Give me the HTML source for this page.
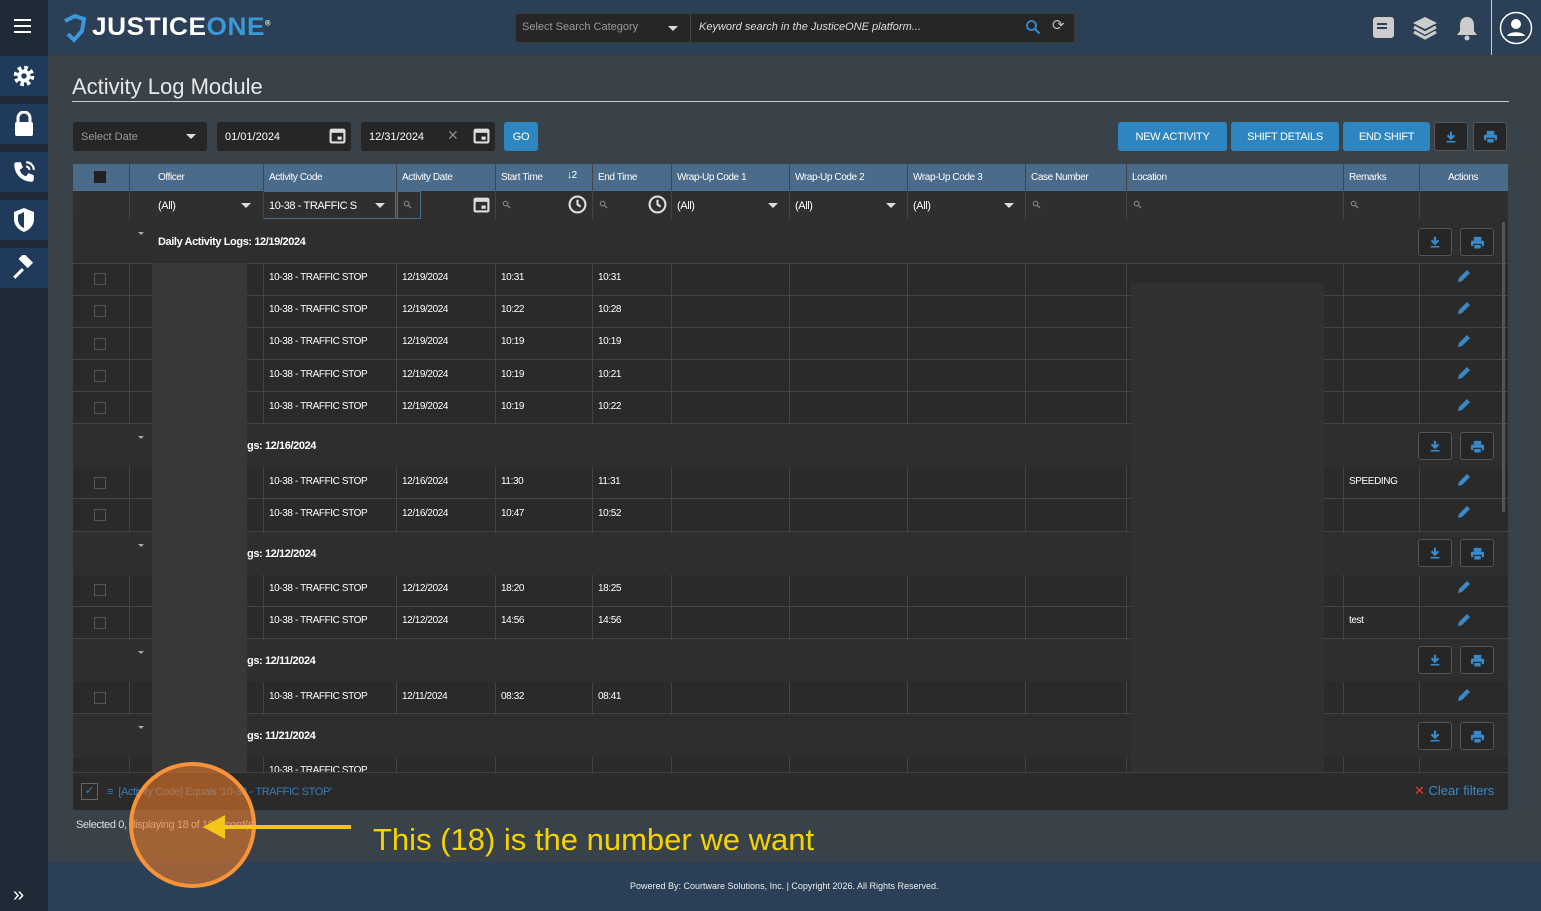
<!DOCTYPE html>
<html><head><meta charset="utf-8"><style>
*{box-sizing:border-box;margin:0;padding:0}
body{width:1541px;height:911px;overflow:hidden;background:#3a4249;font-family:"Liberation Sans",sans-serif;color:#fff;position:relative}
.a{position:absolute}
.top{left:0;top:0;width:1541px;height:55px;background:#2b4056}
.side{left:0;top:0;width:48px;height:911px;background:#1e2b37}
.sbtn{left:0;width:48px;height:40px;background:#1f3a5a;display:flex;align-items:center;justify-content:center}
.t{font-size:10px;letter-spacing:-0.4px;color:#fff;white-space:nowrap}
.hdr{top:164px;height:27px;background:#4a6b8a}
.flt{top:191px;height:29px;background:#2f2f2f}
.vl{width:1px;background:#444}
.row{left:73px;width:1435px;background:#2a2a2a;border-bottom:1px solid #444}
.grp{left:73px;width:1435px;background:#2e2e2e;border-bottom:1px solid #444}
.cb{width:12px;height:12px;border:1px solid #555}
.ib{width:34px;height:28px;border:1px solid #555;border-radius:3px;background:#262626;display:flex;align-items:center;justify-content:center}
.btn{top:122px;height:29px;background:#2e86c1;border-radius:3px;font-size:11px;display:flex;align-items:center;justify-content:center;letter-spacing:-0.3px}
.inp{top:122px;height:29px;background:#262626;border-radius:3px;font-size:11px;display:flex;align-items:center;padding-left:8px}
.pen{position:absolute;left:1456px;width:16px;height:16px}
</style></head><body>
<svg width="0" height="0" style="position:absolute"><defs>
<symbol id="dl" viewBox="0 0 16 16"><path d="M8 2v8M4 6l4 4 4-4" fill="none" stroke="#3a8ac9" stroke-width="2.5"/><rect x="3" y="12.5" width="10" height="1.8" fill="#3a8ac9"/></symbol>
<symbol id="pr" viewBox="0 0 16 16"><rect x="4" y="2" width="8" height="4" fill="#3a8ac9"/><rect x="1" y="6" width="14" height="6" rx="1.5" fill="#3a8ac9"/><rect x="4" y="10" width="8" height="5" fill="#3a8ac9" stroke="#262626" stroke-width="1.2"/></symbol>
<symbol id="pn" viewBox="0 0 16 16"><path d="M2 14l1-4 8-8 3 3-8 8z" fill="#3a8ac9"/></symbol>
<symbol id="cal" viewBox="0 0 16 16"><rect x="1.5" y="2.5" width="13" height="12" rx="1" fill="none" stroke="#ddd" stroke-width="2"/><rect x="1.5" y="2.5" width="13" height="3" fill="#ddd"/><rect x="8" y="9" width="4" height="3" fill="#ddd"/></symbol>
<symbol id="clk" viewBox="0 0 18 18"><circle cx="9" cy="9" r="7.5" fill="none" stroke="#ddd" stroke-width="2"/><path d="M9 4.5V9l3 2" fill="none" stroke="#ddd" stroke-width="2"/></symbol>
<symbol id="mg" viewBox="0 0 10 10"><circle cx="4" cy="4" r="2.6" fill="none" stroke="#888" stroke-width="1.2"/><path d="M6 6l3 3" stroke="#888" stroke-width="1.3"/></symbol>
</defs></svg>
<div class="a top"></div>
<div class="a side"></div>
<div class="a" style="left:0;top:0;width:48px;height:55px;background:#1e2b37"></div>
<div class="a" style="left:14px;top:19px;width:17px;height:2px;background:#fff;box-shadow:0 6px 0 #fff,0 12px 0 #fff"></div>
<!-- logo -->
<svg class="a" style="left:60px;top:12px" width="30" height="32" viewBox="0 0 30 32"><path d="M5 9 L15 4 L24 7 L22 19 L14 28 L8 22" fill="none" stroke="#3a9ad9" stroke-width="4"/></svg>
<div class="a" style="left:92px;top:13px;font-size:25px;font-weight:bold;letter-spacing:0.5px;transform:scaleX(1.05);transform-origin:left">JUSTICE<span style="color:#3a9ad9">ONE</span><sup style="font-size:7px">®</sup></div>
<!-- sidebar buttons -->
<div class="a sbtn" style="top:56px"><svg width="26" height="26" viewBox="0 0 24 24"><circle cx="12" cy="12" r="7" fill="none" stroke="#fff" stroke-width="5" stroke-dasharray="3 2.5"/><circle cx="12" cy="12" r="6" fill="#fff"/><circle cx="12" cy="12" r="2.5" fill="#1f3a5a"/></svg></div>
<div class="a sbtn" style="top:104px"><svg width="24" height="26" viewBox="0 0 24 26"><path d="M6 11V7a6 6 0 0112 0v4" fill="none" stroke="#fff" stroke-width="3"/><rect x="3" y="11" width="18" height="14" rx="2" fill="#fff"/></svg></div>
<div class="a sbtn" style="top:152px"><svg width="26" height="26" viewBox="0 0 24 24"><path d="M5 3l4 0 2 5-3 2c1 3 3 5 6 6l2-3 5 2v4c0 1-1 2-2 2C10 21 3 14 3 5c0-1 1-2 2-2z" fill="#fff"/><path d="M14 3a7 7 0 017 7M14 7a3 3 0 013 3" fill="none" stroke="#fff" stroke-width="2"/></svg></div>
<div class="a sbtn" style="top:200px"><svg width="24" height="26" viewBox="0 0 24 26"><path d="M12 1L22 5v7c0 7-5 11-10 13C7 23 2 19 2 12V5z" fill="#fff"/><path d="M12 5v16c-3-1-6-4-6-9V8z" fill="#1f3a5a"/></svg></div>
<div class="a sbtn" style="top:248px"><svg width="26" height="26" viewBox="0 0 24 24"><rect x="8" y="2" width="12" height="7" transform="rotate(45 14 5)" fill="#fff"/><path d="M10 12L2 20l2 2 8-8" fill="#fff"/></svg></div>
<div class="a" style="left:13px;top:884px;font-size:20px;color:#fff">»</div>
<!-- search -->
<div class="a" style="left:515px;top:13px;width:560px;height:30px;background:#262626;border:1px solid #3c3c3c;border-radius:2px"></div>
<div class="a" style="left:690px;top:13px;width:1px;height:30px;background:#444"></div>
<div class="a" style="left:522px;top:21px;font-size:11px;color:#999">Select Search Category</div>
<div class="a" style="left:668px;top:26px;border:5px solid transparent;border-top-color:#ddd"></div>
<div class="a" style="left:699px;top:21px;font-size:11px;font-style:italic;color:#ddd">Keyword search in the JusticeONE platform...</div>
<svg class="a" style="left:1025px;top:19px" width="16" height="16" viewBox="0 0 16 16"><circle cx="6.5" cy="6.5" r="4.5" fill="none" stroke="#3a8ac9" stroke-width="1.8"/><path d="M10 10l4.5 4.5" stroke="#3a8ac9" stroke-width="2"/></svg>
<div class="a" style="left:1052px;top:16px;font-size:15px;color:#bbb">&#10227;</div>
<!-- top right icons -->
<div class="a" style="left:1373px;top:17px;width:21px;height:21px;background:#ccc;border-radius:3px"></div>
<div class="a" style="left:1377px;top:23px;width:10px;height:2px;background:#2b4056;box-shadow:0 4px 0 #2b4056"></div>
<svg class="a" style="left:1412px;top:15px" width="27" height="26" viewBox="0 0 27 26"><path d="M13 2L25 8 13 14 1 8z" fill="#ccc"/><path d="M2 12l11 6 11-6M2 17l11 6 11-6" fill="none" stroke="#ccc" stroke-width="3"/></svg>
<svg class="a" style="left:1456px;top:15px" width="22" height="26" viewBox="0 0 22 26"><path d="M11 2c5 0 7 4 7 8v6l3 4H1l3-4v-6c0-4 2-8 7-8z" fill="#ccc"/><circle cx="11" cy="23" r="2.5" fill="#ccc"/></svg>
<div class="a" style="left:1491px;top:0;width:1px;height:55px;background:#ccc"></div>
<svg class="a" style="left:1499px;top:11px" width="34" height="34" viewBox="0 0 34 34"><circle cx="17" cy="17" r="15.5" fill="none" stroke="#fff" stroke-width="1.5"/><circle cx="17" cy="13" r="5" fill="#fff"/><path d="M8 25c2-5 16-5 18 0z" fill="#fff"/></svg>
<!-- title -->
<div class="a" style="left:72px;top:74px;font-size:22px;color:#e8e8e8">Activity Log Module</div>
<div class="a" style="left:72px;top:101px;width:1437px;height:1px;background:#ccc"></div>
<!-- controls -->
<div class="a inp" style="left:73px;width:134px;color:#999">Select Date</div>
<div class="a" style="left:186px;top:134px;border:5px solid transparent;border-top-color:#ddd"></div>
<div class="a inp" style="left:217px;width:134px">01/01/2024</div>
<div class="a inp" style="left:361px;width:134px">12/31/2024</div>
<div class="a" style="left:447px;top:127px;font-size:14px;color:#888">✕</div>
<svg class="a" style="left:329px;top:127px" width="17" height="17"><use href="#cal"/></svg>
<svg class="a" style="left:473px;top:127px" width="17" height="17"><use href="#cal"/></svg>
<div class="a btn" style="left:504px;width:34px">GO</div>
<div class="a btn" style="left:1118px;width:109px">NEW ACTIVITY</div>
<div class="a btn" style="left:1231px;width:108px">SHIFT DETAILS</div>
<div class="a btn" style="left:1343px;width:87px">END SHIFT</div>
<div class="a ib" style="left:1434px;top:122px;height:29px"><svg width="14" height="14"><use href="#dl"/></svg></div>
<div class="a ib" style="left:1473px;top:122px;height:29px"><svg width="15" height="15"><use href="#pr"/></svg></div>
<!-- header -->
<div class="a hdr" style="left:73px;width:1435px"></div>
<div class="a" style="left:94px;top:171px;width:12px;height:12px;background:#222"></div>
<div class="a t" style="left:158px;top:172px">Officer</div>
<div class="a t" style="left:269px;top:172px">Activity Code</div>
<div class="a t" style="left:402px;top:172px">Activity Date</div>
<div class="a t" style="left:501px;top:172px">Start Time</div>
<div class="a t" style="left:567px;top:170px">↓2</div>
<div class="a t" style="left:598px;top:172px">End Time</div>
<div class="a t" style="left:677px;top:172px">Wrap-Up Code 1</div>
<div class="a t" style="left:795px;top:172px">Wrap-Up Code 2</div>
<div class="a t" style="left:913px;top:172px">Wrap-Up Code 3</div>
<div class="a t" style="left:1031px;top:172px">Case Number</div>
<div class="a t" style="left:1132px;top:172px">Location</div>
<div class="a t" style="left:1349px;top:172px">Remarks</div>
<div class="a t" style="left:1448px;top:172px">Actions</div>
<!-- filter -->
<div class="a flt" style="left:73px;width:1435px"></div>
<div class="a" style="left:263px;top:191px;width:133px;height:28px;border:1px solid #4a6b8a"></div>
<div class="a" style="left:397px;top:191px;width:24px;height:28px;border:1px solid #4a6b8a"></div>
<div class="a t" style="left:158px;top:200px;font-size:11px">(All)</div>
<div class="a t" style="left:269px;top:200px;font-size:11px">10-38 - TRAFFIC S</div>
<div class="a t" style="left:677px;top:200px;font-size:11px">(All)</div>
<div class="a t" style="left:795px;top:200px;font-size:11px">(All)</div>
<div class="a t" style="left:913px;top:200px;font-size:11px">(All)</div>
<div class="a" style="left:241px;top:203px;border:5px solid transparent;border-top-color:#ddd"></div>
<div class="a" style="left:375px;top:203px;border:5px solid transparent;border-top-color:#ddd"></div>
<div class="a" style="left:768px;top:203px;border:5px solid transparent;border-top-color:#ddd"></div>
<div class="a" style="left:886px;top:203px;border:5px solid transparent;border-top-color:#ddd"></div>
<div class="a" style="left:1004px;top:203px;border:5px solid transparent;border-top-color:#ddd"></div>
<svg class="a" style="left:473px;top:196px" width="17" height="17"><use href="#cal"/></svg>
<svg class="a" style="left:568px;top:195px" width="19" height="19"><use href="#clk"/></svg>
<svg class="a" style="left:648px;top:195px" width="19" height="19"><use href="#clk"/></svg>
<svg class="a" style="left:403px;top:200px" width="9" height="9"><use href="#mg"/></svg>
<svg class="a" style="left:502px;top:200px" width="9" height="9"><use href="#mg"/></svg>
<svg class="a" style="left:599px;top:200px" width="9" height="9"><use href="#mg"/></svg>
<svg class="a" style="left:1032px;top:200px" width="9" height="9"><use href="#mg"/></svg>
<svg class="a" style="left:1133px;top:200px" width="9" height="9"><use href="#mg"/></svg>
<svg class="a" style="left:1350px;top:200px" width="9" height="9"><use href="#mg"/></svg>

<!-- body rows -->
<div class="a" style="left:73px;top:220px;width:1435px;height:552px;overflow:hidden">
<div class="a grp" style="left:0;top:0;height:44px"></div>
<div class="a row" style="left:0;top:44px;height:32px"></div><div class="a row" style="left:0;top:76px;height:32px"></div><div class="a row" style="left:0;top:108px;height:32px"></div><div class="a row" style="left:0;top:140px;height:32px"></div><div class="a row" style="left:0;top:172px;height:32px"></div>
<div class="a grp" style="left:0;top:204px;height:43px"></div>
<div class="a row" style="left:0;top:247px;height:32px"></div><div class="a row" style="left:0;top:279px;height:33px"></div>
<div class="a grp" style="left:0;top:312px;height:43px"></div>
<div class="a row" style="left:0;top:355px;height:32px"></div><div class="a row" style="left:0;top:387px;height:32px"></div>
<div class="a grp" style="left:0;top:419px;height:43px"></div>
<div class="a row" style="left:0;top:462px;height:32px"></div>
<div class="a grp" style="left:0;top:494px;height:43px"></div>
<div class="a row" style="left:0;top:537px;height:32px"></div>
</div>
<div class="a vl" style="left:129px;top:164px;height:608px"></div>
<div class="a vl" style="left:263px;top:164px;height:608px"></div>
<div class="a vl" style="left:396px;top:164px;height:608px"></div>
<div class="a vl" style="left:495px;top:164px;height:608px"></div>
<div class="a vl" style="left:592px;top:164px;height:608px"></div>
<div class="a vl" style="left:671px;top:164px;height:608px"></div>
<div class="a vl" style="left:789px;top:164px;height:608px"></div>
<div class="a vl" style="left:907px;top:164px;height:608px"></div>
<div class="a vl" style="left:1025px;top:164px;height:608px"></div>
<div class="a vl" style="left:1126px;top:164px;height:608px"></div>
<div class="a vl" style="left:1343px;top:164px;height:608px"></div>
<div class="a vl" style="left:1419px;top:164px;height:608px"></div>
<div class="a" style="left:74px;top:220px;width:1434px;height:43px;background:#2e2e2e"></div>
<div class="a" style="left:74px;top:425px;width:1434px;height:42px;background:#2e2e2e"></div>
<div class="a" style="left:74px;top:533px;width:1434px;height:42px;background:#2e2e2e"></div>
<div class="a" style="left:74px;top:640px;width:1434px;height:42px;background:#2e2e2e"></div>
<div class="a" style="left:74px;top:715px;width:1434px;height:42px;background:#2e2e2e"></div>
<!-- blur areas -->
<div class="a" style="left:152px;top:263px;width:95px;height:509px;background:#383838"></div>
<div class="a" style="left:1131px;top:283px;width:193px;height:489px;background:#313131"></div>
<!-- group labels -->
<div class="a" style="left:138px;top:232px;border:3px solid transparent;border-top-color:#aaa"></div>
<div class="a" style="left:138px;top:436px;border:3px solid transparent;border-top-color:#aaa"></div>
<div class="a" style="left:138px;top:544px;border:3px solid transparent;border-top-color:#aaa"></div>
<div class="a" style="left:138px;top:651px;border:3px solid transparent;border-top-color:#aaa"></div>
<div class="a" style="left:138px;top:726px;border:3px solid transparent;border-top-color:#aaa"></div>
<div class="a t" style="left:158px;top:236px;font-size:11px;font-weight:bold">Daily Activity Logs: 12/19/2024</div>
<div class="a t" style="left:247px;top:440px;font-size:11px;font-weight:bold">gs: 12/16/2024</div>
<div class="a t" style="left:247px;top:548px;font-size:11px;font-weight:bold">gs: 12/12/2024</div>
<div class="a t" style="left:247px;top:655px;font-size:11px;font-weight:bold">gs: 12/11/2024</div>
<div class="a t" style="left:247px;top:730px;font-size:11px;font-weight:bold">gs: 11/21/2024</div>
<div class="a ib" style="left:1418px;top:228px"><svg width="14" height="14"><use href="#dl"/></svg></div><div class="a ib" style="left:1460px;top:228px"><svg width="15" height="15"><use href="#pr"/></svg></div>
<div class="a ib" style="left:1418px;top:432px"><svg width="14" height="14"><use href="#dl"/></svg></div><div class="a ib" style="left:1460px;top:432px"><svg width="15" height="15"><use href="#pr"/></svg></div>
<div class="a ib" style="left:1418px;top:539px"><svg width="14" height="14"><use href="#dl"/></svg></div><div class="a ib" style="left:1460px;top:539px"><svg width="15" height="15"><use href="#pr"/></svg></div>
<div class="a ib" style="left:1418px;top:646px"><svg width="14" height="14"><use href="#dl"/></svg></div><div class="a ib" style="left:1460px;top:646px"><svg width="15" height="15"><use href="#pr"/></svg></div>
<div class="a ib" style="left:1418px;top:722px"><svg width="14" height="14"><use href="#dl"/></svg></div><div class="a ib" style="left:1460px;top:722px"><svg width="15" height="15"><use href="#pr"/></svg></div>
<!-- data rows -->
<div class="a cb" style="left:94px;top:273px"></div><div class="a t" style="left:269px;top:272px">10-38 - TRAFFIC STOP</div><div class="a t" style="left:402px;top:272px">12/19/2024</div><div class="a t" style="left:501px;top:272px">10:31</div><div class="a t" style="left:598px;top:272px">10:31</div><svg class="pen" style="top:268px"><use href="#pn"/></svg>
<div class="a cb" style="left:94px;top:305px"></div><div class="a t" style="left:269px;top:304px">10-38 - TRAFFIC STOP</div><div class="a t" style="left:402px;top:304px">12/19/2024</div><div class="a t" style="left:501px;top:304px">10:22</div><div class="a t" style="left:598px;top:304px">10:28</div><svg class="pen" style="top:300px"><use href="#pn"/></svg>
<div class="a cb" style="left:94px;top:338px"></div><div class="a t" style="left:269px;top:336px">10-38 - TRAFFIC STOP</div><div class="a t" style="left:402px;top:336px">12/19/2024</div><div class="a t" style="left:501px;top:336px">10:19</div><div class="a t" style="left:598px;top:336px">10:19</div><svg class="pen" style="top:333px"><use href="#pn"/></svg>
<div class="a cb" style="left:94px;top:370px"></div><div class="a t" style="left:269px;top:369px">10-38 - TRAFFIC STOP</div><div class="a t" style="left:402px;top:369px">12/19/2024</div><div class="a t" style="left:501px;top:369px">10:19</div><div class="a t" style="left:598px;top:369px">10:21</div><svg class="pen" style="top:365px"><use href="#pn"/></svg>
<div class="a cb" style="left:94px;top:402px"></div><div class="a t" style="left:269px;top:401px">10-38 - TRAFFIC STOP</div><div class="a t" style="left:402px;top:401px">12/19/2024</div><div class="a t" style="left:501px;top:401px">10:19</div><div class="a t" style="left:598px;top:401px">10:22</div><svg class="pen" style="top:397px"><use href="#pn"/></svg>
<div class="a cb" style="left:94px;top:477px"></div><div class="a t" style="left:269px;top:476px">10-38 - TRAFFIC STOP</div><div class="a t" style="left:402px;top:476px">12/16/2024</div><div class="a t" style="left:501px;top:476px">11:30</div><div class="a t" style="left:598px;top:476px">11:31</div><div class="a t" style="left:1349px;top:476px">SPEEDING</div><svg class="pen" style="top:472px"><use href="#pn"/></svg>
<div class="a cb" style="left:94px;top:509px"></div><div class="a t" style="left:269px;top:508px">10-38 - TRAFFIC STOP</div><div class="a t" style="left:402px;top:508px">12/16/2024</div><div class="a t" style="left:501px;top:508px">10:47</div><div class="a t" style="left:598px;top:508px">10:52</div><svg class="pen" style="top:504px"><use href="#pn"/></svg>
<div class="a cb" style="left:94px;top:584px"></div><div class="a t" style="left:269px;top:583px">10-38 - TRAFFIC STOP</div><div class="a t" style="left:402px;top:583px">12/12/2024</div><div class="a t" style="left:501px;top:583px">18:20</div><div class="a t" style="left:598px;top:583px">18:25</div><svg class="pen" style="top:579px"><use href="#pn"/></svg>
<div class="a cb" style="left:94px;top:617px"></div><div class="a t" style="left:269px;top:615px">10-38 - TRAFFIC STOP</div><div class="a t" style="left:402px;top:615px">12/12/2024</div><div class="a t" style="left:501px;top:615px">14:56</div><div class="a t" style="left:598px;top:615px">14:56</div><div class="a t" style="left:1349px;top:615px">test</div><svg class="pen" style="top:612px"><use href="#pn"/></svg>
<div class="a cb" style="left:94px;top:692px"></div><div class="a t" style="left:269px;top:691px">10-38 - TRAFFIC STOP</div><div class="a t" style="left:402px;top:691px">12/11/2024</div><div class="a t" style="left:501px;top:691px">08:32</div><div class="a t" style="left:598px;top:691px">08:41</div><svg class="pen" style="top:687px"><use href="#pn"/></svg>
<div class="a t" style="left:269px;top:765px;height:7px;overflow:hidden">10-38 - TRAFFIC STOP</div>
<div class="a" style="left:1502px;top:222px;width:3px;height:290px;background:#555"></div>
<!-- filter bar -->
<div class="a" style="left:73px;top:772px;width:1435px;height:38px;background:#2a2a2a;border-top:1px solid #444"></div>
<div class="a" style="left:81px;top:783px;width:17px;height:17px;border:1px solid #666;color:#3a8ac9;font-size:11px;text-align:center">✓</div>
<div class="a t" style="left:107px;top:786px;font-size:11px;color:#3a7ab9">≡ &nbsp;[Activity Code] Equals '10-38 - TRAFFIC STOP'</div>
<div class="a" style="left:1414px;top:783px;font-size:13px;color:#3a8ac9"><span style="color:#e53935">✕</span> Clear filters</div>
<div class="a t" style="left:76px;top:819px;font-size:11px;color:#ddd">Selected 0, displaying 18 of 18 record(s)</div>
<!-- footer -->
<div class="a" style="left:48px;top:862px;width:1493px;height:49px;background:#2b4056"></div>
<div class="a" style="left:630px;top:881px;font-size:9px;color:#eee">Powered By: Courtware Solutions, Inc. | Copyright 2026. All Rights Reserved.</div>
<!-- annotation -->
<div class="a" style="left:129px;top:762px;width:127px;height:126px;border-radius:50%;border:4px solid #f7943a;background:rgba(230,120,40,0.6)"></div>
<div class="a" style="left:225px;top:825px;width:126px;height:4px;background:#f5c518"></div>
<div class="a" style="left:203px;top:815px;border:12px solid transparent;border-right:22px solid #f5c518;border-left:0"></div>
<div class="a" style="left:373px;top:822px;font-size:31px;color:#f5d300">This (18) is the number we want</div>
</body></html>
